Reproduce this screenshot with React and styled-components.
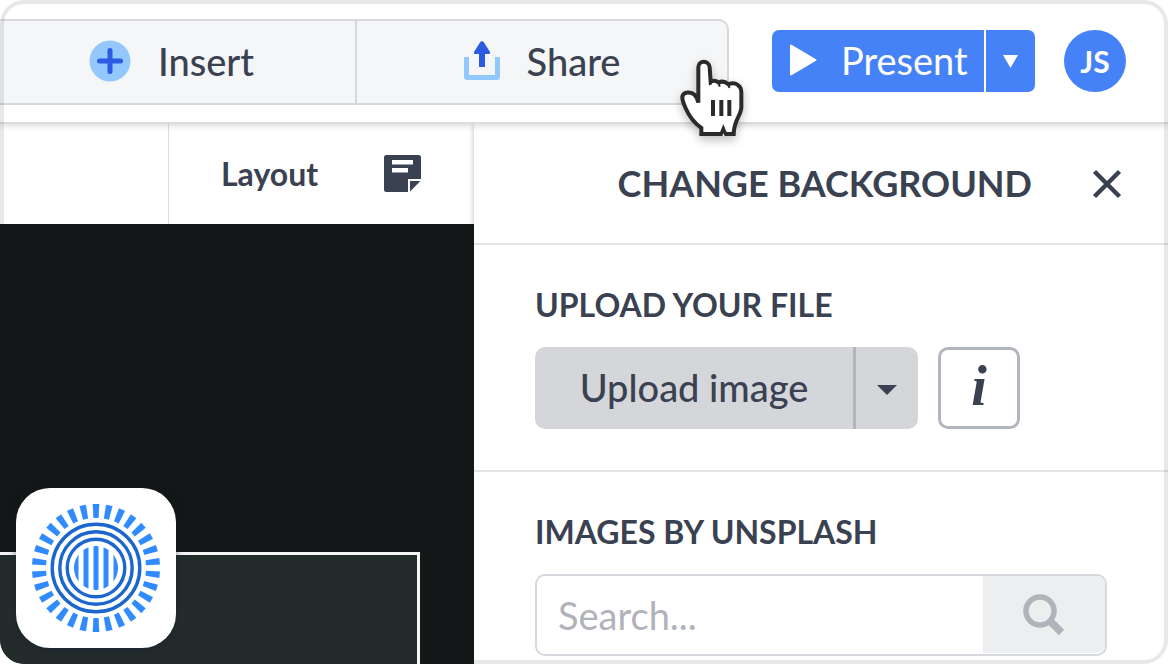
import React from 'react';
import styled, { createGlobalStyle } from 'styled-components';

const ink = '#3a4252';
const blue = '#4682f7';

const GlobalStyle = createGlobalStyle`
  * {
    box-sizing: border-box;
  }
  body {
    margin: 0;
    background: #fff;
    color: ${ink};
    font-family: Lato, "Open Sans", sans-serif;
  }
  button, input {
    font-family: inherit;
    color: inherit;
  }
  button {
    margin: 0;
    padding: 0;
    border: 0;
    background: none;
    cursor: pointer;
  }
  svg {
    display: block;
    flex: none;
  }
`;

const rays = Array.from({ length: 30 }, (_, i) => i * 12);
const bars = [-20, -10, 0, 10, 20];

const PlusIcon = () => (
    <svg width="42" height="42" viewBox="0 0 42 42" aria-hidden="true">
        <circle cx="21" cy="21" r="20.5" fill="#93c8fc" />
        <path d="M21 10.5v21M10.5 21h21" stroke="#2b5be2" strokeWidth="5" strokeLinecap="round" />
    </svg>
);

const ShareIcon = () => (
    <svg width="36" height="40" viewBox="0 0 36 40" aria-hidden="true">
        <path d="M0 16h5v18h26V16h5v20a3 3 0 0 1-3 3H3a3 3 0 0 1-3-3z" fill="#93c8fc" />
        <path d="M18 0q1 0 2 1.500L26 11q.5 2-1 2h-4v13h-6V13h-4q-1.500 0-1-2l6-9.500Q17 0 18 0z" fill="#2b5be2" />
    </svg>
);

const NoteIcon = () => (
    <svg width="37" height="37" viewBox="0 0 37 37" aria-hidden="true">
        <path d="M2.500 0h32A2.500 2.500 0 0 1 37 2.500V24H24v13H2.500A2.500 2.500 0 0 1 0 34.500v-32A2.500 2.500 0 0 1 2.500 0z" fill={ink} />
        <path d="M8 5h21v4.500H8zM8 13h16v4.500H8z" fill="#fff" />
        <path d="M26 26h10.500L26 36.500z" fill={ink} />
    </svg>
);

const CloseIcon = () => (
    <svg width="30" height="30" viewBox="0 0 30 30" aria-hidden="true">
        <path d="M2.500 2.500l25 25M27.500 2.500l-25 25" stroke={ink} strokeWidth="4.500" />
    </svg>
);

const SearchIcon = () => (
    <svg width="42" height="42" viewBox="0 0 42 42" aria-hidden="true">
        <circle cx="17" cy="17" r="14" fill="none" stroke="#b0b3ba" strokeWidth="5.500" />
        <path d="M27 27l11.500 11.500" stroke="#b0b3ba" strokeWidth="7.500" />
    </svg>
);

const Logo = () => (
    <svg width="128" height="128" viewBox="-64 -64 128 128" aria-hidden="true">
        <clipPath id="core"><circle r="22" /></clipPath>
        <g fill="#318bff">
            {rays.map(angle => (
                <path key={angle} d="M-3.300-64h6.600L2.600-50h-5.200z" transform={`rotate(${angle})`} />
            ))}
            <g clipPath="url(#core)">
                {bars.map(x => <rect key={x} x={x - 2.5} y="-22" width="5" height="44" />)}
            </g>
        </g>
        <g fill="none" stroke="#1b66cf" strokeWidth="3.400">
            <circle r="43.800" />
            <circle r="36.200" />
            <circle r="28.800" />
        </g>
    </svg>
);

const Hand = () => (
    <svg width="64" height="78" viewBox="60 57 192 234" aria-hidden="true">
        <path
            d="M115 188V82C115 60 147 60 149 82L152 126Q163 118 176 128Q190 120 205 133C228 124 244 138 244 156V205C240 232 222 240 221 282H124V264C100 247 86 226 77 205C71 190 66 182 67 170C70 154 94 155 103 164Q112 173 115 188z"
            fill="#fff" stroke="#2b2b2b" strokeWidth="12"
        />
        <path d="M176 128l3 12M206 132l2 12M152 122v12" stroke="#2b2b2b" strokeWidth="6" />
        <path d="M159 180v48M184 180v48M208 180v48" stroke="#2b2b2b" strokeWidth="12" />
        <path d="M178 282l12-30 12 30z" fill="#2b2b2b" />
        <path d="M187 288l3-8 4 8z" fill="#fff" />
    </svg>
);

export default function App() {
    return (
        <Window>
            <GlobalStyle />
            <TopBar>
                <Tools>
                    <Tool $inset="12px"><PlusIcon />Insert</Tool>
                    <Tool><ShareIcon />Share</Tool>
                    <Cursor><Hand /></Cursor>
                </Tools>
                <Present>
                    <PresentButton>
                        <svg width="28" height="32" viewBox="0 0 28 32" aria-hidden="true">
                            <path d="M2 1.500v29L26.500 16z" fill="#fff" stroke="#fff" strokeWidth="2" strokeLinejoin="round" />
                        </svg>
                        Present
                    </PresentButton>
                    <PresentMore aria-label="Present options">
                        <svg width="15" height="13" viewBox="0 0 15 13" aria-hidden="true">
                            <path d="M0 0h15L7.500 13z" fill="#fff" />
                        </svg>
                    </PresentMore>
                </Present>
                <Avatar>JS</Avatar>
            </TopBar>
            <Workspace>
                <Editor>
                    <Toolbar>
                        <LayoutTools>
                            <LayoutButton>Layout</LayoutButton>
                            <button aria-label="Notes"><NoteIcon /></button>
                        </LayoutTools>
                    </Toolbar>
                    <Stage>
                        <Slide />
                        <AppTile><Logo /></AppTile>
                    </Stage>
                </Editor>
                <Panel>
                    <PanelHeader>
                        <PanelTitle>CHANGE BACKGROUND</PanelTitle>
                        <button aria-label="Close"><CloseIcon /></button>
                    </PanelHeader>
                    <Section>
                        <SectionTitle>UPLOAD YOUR FILE</SectionTitle>
                        <UploadRow>
                            <UploadButton>Upload image</UploadButton>
                            <UploadMore aria-label="Upload options">
                                <svg width="20" height="10" viewBox="0 0 20 10" aria-hidden="true">
                                    <path d="M0 0h20L10 10z" fill={ink} />
                                </svg>
                            </UploadMore>
                            <InfoButton aria-label="Info">i</InfoButton>
                        </UploadRow>
                    </Section>
                    <Section>
                        <SectionTitle as="label" htmlFor="search">IMAGES BY UNSPLASH</SectionTitle>
                        <SearchBox>
                            <SearchInput id="search" type="text" placeholder="Search..." />
                            <SearchButton aria-label="Search"><SearchIcon /></SearchButton>
                        </SearchBox>
                    </Section>
                </Panel>
            </Workspace>
        </Window>
    );
}

const Window = styled.div`
  position: relative;
  display: flex;
  flex-direction: column;
  height: 100vh;
  overflow: hidden;
  border-radius: 24px;
  background: #fff;

  &::after {
    content: "";
    position: absolute;
    inset: 0;
    z-index: 3;
    border: 4px solid rgba(58, 66, 82, 0.12);
    border-radius: 24px;
    pointer-events: none;
  }
`;

const TopBar = styled.header`
  position: relative;
  z-index: 1;
  display: flex;
  align-items: center;
  flex: none;
  height: 124px;
  padding-right: 42px;
  border-bottom: 2px solid #dcdcde;
  background: #fff;
  box-shadow: 0 2px 6px rgba(0, 0, 0, 0.14);
`;

const Tools = styled.nav`
  position: relative;
  flex: 1;
  display: grid;
  grid-template-columns: 356fr 373fr;
  height: 86px;
  margin-top: 2px;
  margin-right: 43px;
  border: 2px solid #d6d8dd;
  border-left: 0;
  border-radius: 0 10px 10px 0;
  background: #f5f6f8;
`;

const Tool = styled.button`
  display: flex;
  align-items: center;
  justify-content: center;
  gap: 27px;
  padding-right: ${props => props.$inset || '0'};
  padding-bottom: 2px;
  font-size: 38px;
  font-weight: 500;

  & + & {
    border-left: 2px solid #d6d8dd;
  }
`;

const Cursor = styled.span`
  position: absolute;
  right: -17px;
  bottom: -34px;
  filter: drop-shadow(0 4px 5px rgba(0, 0, 0, 0.25));
`;

const Present = styled.div`
  display: flex;
  gap: 2px;
  height: 62px;
  border-radius: 7px;
  overflow: hidden;
`;

const PresentButton = styled.button`
  display: flex;
  align-items: center;
  gap: 24px;
  width: 212px;
  padding-left: 17px;
  padding-bottom: 2px;
  background: ${blue};
  color: #fff;
  font-size: 38px;
`;

const PresentMore = styled.button`
  display: flex;
  align-items: center;
  justify-content: center;
  width: 49px;
  background: ${blue};
`;

const Avatar = styled.button`
  flex: none;
  width: 62px;
  height: 62px;
  margin-left: 29px;
  border-radius: 50%;
  background: ${blue};
  color: #fff;
  font-size: 30px;
  font-weight: 700;
`;

const Workspace = styled.main`
  flex: 1;
  min-height: 0;
  display: grid;
  grid-template-columns: 474fr 694fr;
  grid-template-rows: minmax(0, 1fr);
`;

const Editor = styled.section`
  display: flex;
  flex-direction: column;
  min-width: 0;
`;

const Toolbar = styled.div`
  display: flex;
  justify-content: flex-end;
  flex: none;
  height: 100px;
`;

const LayoutTools = styled.div`
  display: flex;
  align-items: center;
  justify-content: space-between;
  width: 306px;
  padding: 0 53px 2px 52px;
  border-left: 1px solid #dcdde0;
`;

const LayoutButton = styled.button`
  font-size: 32px;
  font-weight: 700;
`;

const Stage = styled.div`
  position: relative;
  z-index: 4;
  flex: 1;
  display: flex;
  align-items: flex-end;
  border-bottom-left-radius: 24px;
  overflow: hidden;
  background: #131717;
`;

const Slide = styled.div`
  flex: 1;
  height: 112px;
  margin-right: 54px;
  border: 3px solid #f4f6f6;
  border-width: 3px 3px 0 0;
  background: #242c2b;
`;

const AppTile = styled.div`
  position: absolute;
  left: 16px;
  bottom: 16px;
  display: grid;
  place-items: center;
  width: 160px;
  height: 160px;
  border-radius: 34px;
  background: #fff;
  box-shadow: 0 2px 8px rgba(20, 30, 50, 0.5);
`;

const Panel = styled.aside`
  min-width: 0;
  background: #fff;
  box-shadow: -1px 0 5px rgba(0, 0, 0, 0.2);
`;

const PanelHeader = styled.header`
  display: flex;
  align-items: center;
  justify-content: flex-end;
  gap: 60px;
  height: 121px;
  padding-right: 46px;
  border-bottom: 2px solid #e4e5e8;
`;

const PanelTitle = styled.h1`
  margin: 0;
  padding-bottom: 2px;
  font-size: 36px;
  line-height: 44px;
  font-weight: 700;
`;

const Section = styled.section`
  padding: 40px 61px 41px;

  & + & {
    border-top: 2px solid #e4e5e8;
  }
`;

const SectionTitle = styled.h2`
  display: block;
  margin: 0 0 22px;
  font-size: 32px;
  line-height: 40px;
  font-weight: 700;
`;

const UploadRow = styled.div`
  display: flex;
  height: 82px;
`;

const UploadButton = styled.button`
  width: 318px;
  padding-bottom: 3px;
  border-radius: 10px 0 0 10px;
  background: #d5d6da;
  font-size: 38px;
  font-weight: 500;
`;

const UploadMore = styled.button`
  display: flex;
  align-items: center;
  justify-content: center;
  width: 65px;
  padding-top: 4px;
  border-left: 3px solid #b1b5bc;
  border-radius: 0 10px 10px 0;
  background: #d5d6da;
`;

const InfoButton = styled.button`
  width: 82px;
  margin-left: 20px;
  padding-bottom: 4px;
  border: 3px solid #b1b6be;
  border-radius: 10px;
  font-family: "Liberation Serif", serif;
  font-size: 56px;
  line-height: 56px;
  font-style: italic;
  font-weight: 700;
`;

const SearchBox = styled.div`
  display: flex;
  height: 82px;
  padding-bottom: 1px;
  border: 2px solid #d6d8dd;
  border-radius: 10px;
  background: #fff;
`;

const SearchInput = styled.input`
  flex: 1;
  min-width: 0;
  padding: 0 21px;
  border: 0;
  border-radius: 10px;
  outline: 0;
  background: none;
  font-size: 38px;

  &::placeholder {
    color: #b0b3ba;
    opacity: 1;
  }
`;

const SearchButton = styled.button`
  display: flex;
  align-items: center;
  justify-content: center;
  width: 122px;
  border-radius: 0 8px 8px 0;
  background: #edeef0;
`;
